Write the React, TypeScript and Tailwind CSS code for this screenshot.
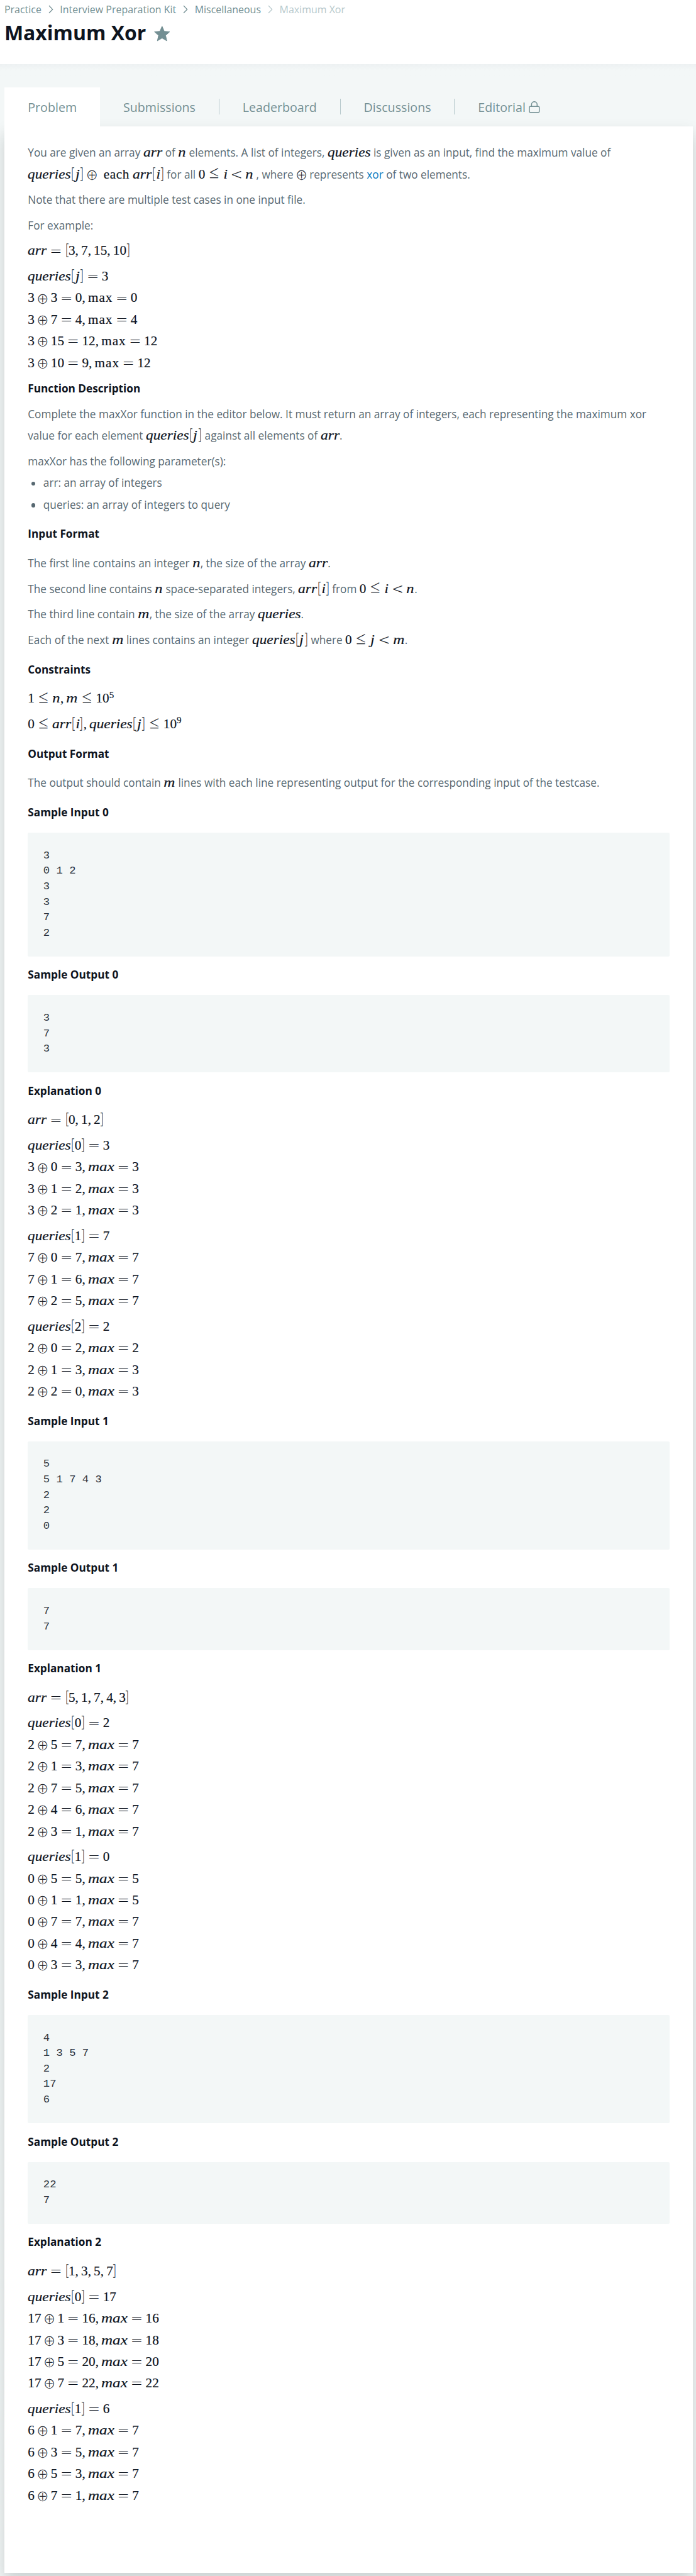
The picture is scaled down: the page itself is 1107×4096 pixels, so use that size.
import React from "react";

/* ---------- Math typesetting ---------- */

const WORD_CLASS: Record<string, string> = {
  queries: "italic inline-block w-[3.229em] origin-left scale-x-[1.097]",
  arr: "italic inline-block w-[1.431em] origin-left scale-x-[1.11]",
  max: "italic inline-block w-[1.979em] origin-left scale-x-[1.18]",
  n: "italic inline-block w-[0.6em] text-center scale-x-[1.15]",
  m: "italic inline-block w-[0.878em] text-center scale-x-[1.18]",
  i: "italic inline-block w-[0.345em] text-center scale-x-[1.1]",
  j: "italic inline-block w-[0.412em] text-center scale-x-[1.15]",
  "\\max": "tracking-[0.046em]",
  "\\each": "tracking-[0.028em] ml-[0.25em] mr-[0.25em]",
};

function Token({ t }: { t: string }) {
  if (t === "=" || t === "<") {
    return (
      <span className="inline-flex w-[0.778em] justify-center mx-[0.278em]">
        <span className="font-['DejaVu_Sans'] font-extralight text-[1.06em] leading-none relative top-[0.05em]">{t}</span>
      </span>
    );
  }
  if (t === "≤") {
    return (
      <span className="inline-flex w-[0.778em] justify-center mx-[0.278em]">
        <span className="font-['Noto_Sans_CJK_JP'] font-thin text-[0.8em] leading-none inline-block scale-y-[1.18] relative top-[-0.02em] [-webkit-text-stroke:0.35px_#0e141e]">
          ≤
        </span>
      </span>
    );
  }
  if (t === "⊕") {
    return (
      <span className="inline-flex w-[0.778em] justify-center mx-[0.222em] [.solo_&]:mx-0">
        <span className="font-['Noto_Sans_CJK_JP'] font-thin text-[0.9em] leading-none relative top-[0.11em] [-webkit-text-stroke:0.3px_#0e141e]">
          ⊕
        </span>
      </span>
    );
  }
  if (t === "[" || t === "]") {
    return (
      <span className="inline-flex w-[0.278em] justify-center">
        <span className="font-['Noto_Sans_CJK_JP'] font-thin text-[1.06em] leading-none inline-block scale-x-[0.8] [-webkit-text-stroke:0.3px_#0e141e]">
          {t}
        </span>
      </span>
    );
  }
  if (t === ",") return <span className="mr-[0.195em]">,</span>;
  if (t[0] === "^") return <span className="text-[0.707em] relative -top-[0.51em]">{t.slice(1)}</span>;
  return <span className={WORD_CLASS[t] ?? ""}>{t.replace("\\", "")}</span>;
}

function M({ children, solo }: { children: string; solo?: boolean }) {
  const tokens = children.match(/\\?[a-z]+|\d+|\^\d|[=<≤⊕,[\]]/g) ?? [];
  return (
    <span
      className={
        (solo ? "solo " : "") +
        "inline-block leading-none whitespace-nowrap text-[21.6px] text-[#0e141e] font-['Liberation_Serif',serif] [-webkit-text-stroke:0.2px_#0e141e]"
      }
    >
      {tokens.map((t, i) => (
        <Token key={i} t={t} />
      ))}
    </span>
  );
}

/* ---------- Content blocks ---------- */

function P({ children }: { children: React.ReactNode }) {
  return <p className="mb-[6.25px] leading-[35px]">{children}</p>;
}

function MathLines({ lines }: { lines: string[] }) {
  return (
    <div className="mb-[6.25px]">
      {lines.map((l, i) => (
        <div key={i} className="h-[35px] leading-[35px]">
          <M>{l}</M>
        </div>
      ))}
    </div>
  );
}

function H({ children }: { children: React.ReactNode }) {
  return <h3 className="mt-[12.5px] mb-[12.5px] h-[35px] font-bold text-[#0e141e] leading-[35px]">{children}</h3>;
}

function Sample({ title, code }: { title: string; code: string }) {
  return (
    <section>
      <h3 className="mt-[12.5px] mb-[15px] h-[35px] font-bold text-[#0e141e] leading-[35px]">{title}</h3>
      <pre className="rounded-[2px] bg-[#f3f7f7] p-[25px] text-[17.5px] leading-[25px] text-[#2b333e] font-['Liberation_Mono',monospace]">
        {code}
      </pre>
    </section>
  );
}

/* ---------- Header ---------- */

function Chevron() {
  return (
    <svg className="mx-[11px] mt-[-1px] h-[14px] w-[8px]" viewBox="0 0 8 14" fill="none" stroke="currentColor" strokeWidth="1.3">
      <path d="M1 1l5.8 6L1 13" />
    </svg>
  );
}

function Header() {
  return (
    <header className="h-[104px] bg-white pl-[7px]">
      <nav className="flex h-8 items-center text-[16.25px] text-[#738f93]">
        <span>Practice</span>
        <Chevron />
        <span>Interview Preparation Kit</span>
        <Chevron />
        <span>Miscellaneous</span>
        <span className="flex items-center text-[#b7c9cc]">
          <Chevron />
          <span>Maximum Xor</span>
        </span>
      </nav>
      <div className="flex h-[42px] items-center">
        <h1 className="text-[32.5px] font-bold leading-[42px] text-[#0e141e]">Maximum Xor</h1>
        <svg className="ml-[13px] mt-[3px] h-[25px] w-[26px]" viewBox="0 0 26 25" fill="#738f93">
          <path
            d="M13 .8l3.5 8.1 8.8.8-6.600 5.900 1.900 8.700-7.600-4.500-7.600 4.500 1.900-8.700L.7 9.700l8.800-.8z"
            stroke="#738f93"
            strokeWidth="1"
            strokeLinejoin="round"
          />
        </svg>
      </div>
    </header>
  );
}

function Tabs() {
  const divider = <span className="h-[25px] w-px bg-[#b7c9cc]" />;
  return (
    <div className="relative z-10 ml-[7.5px] flex h-[63px] items-center text-[20px] text-[#738f93]">
      <a className="flex h-full items-center bg-white px-[37.5px] pt-[2px]">Problem</a>
      <a className="px-[37.5px] pt-[2px]">Submissions</a>
      {divider}
      <a className="px-[37.5px] pt-[2px]">Leaderboard</a>
      {divider}
      <a className="px-[37.5px] pt-[2px]">Discussions</a>
      {divider}
      <a className="flex items-center pl-[37.5px] pt-[2px]">
        Editorial
        <svg className="ml-[5px] h-[19px] w-[18px]" viewBox="0 0 18 19" fill="none" stroke="currentColor" strokeWidth="1.5">
          <rect x="1" y="8.300" width="16" height="9.700" rx="1.500" />
          <path d="M4.500 8.300V5.200a4.500 4.500 0 0 1 9 0v3.100" />
        </svg>
      </a>
    </div>
  );
}

export default function App() {
  return (
    <div className="[zoom:0.9838] flex h-[4163.5px] w-[1125.2px] flex-col overflow-hidden bg-[#f3f7f7] font-['Open_Sans',sans-serif]">
      <Header />
      <div className="h-[37px] bg-linear-to-b from-[#edf1f2] to-[#f3f7f7] to-25%" />
      <Tabs />
      <main className="ml-[7.5px] mr-[5px] h-[3954px] bg-white px-[37.5px] pt-[26px] text-[17.5px] text-[#576871] shadow-[0_12px_24px_rgba(0,20,20,0.18)]">
        <P>
          You are given an array <M>arr</M> of <M>n</M> elements. A list of integers, <M>queries</M> is given as an input, find the
          maximum value of
          <br />
          <M>{"queries[j]⊕\\each arr[i]"}</M> for all <M>{"0≤i<n"}</M> , where <M solo>⊕</M> represents{" "}
          <a className="text-[#097bbf]">xor</a> of two elements.
        </P>
        <P>Note that there are multiple test cases in one input file.</P>
        <P>For example:</P>
        <MathLines lines={["arr=[3,7,15,10]"]} />
        <MathLines lines={["queries[j]=3", "3⊕3=0,\\max=0", "3⊕7=4,\\max=4", "3⊕15=12,\\max=12", "3⊕10=9,\\max=12"]} />
        <P>
          <strong className="font-bold text-[#0e141e]">Function Description</strong>
        </P>
        <P>
          Complete the maxXor function in the editor below. It must return an array of integers, each representing the maximum xor
          <br />
          value for each element <M>queries[j]</M> against all elements of <M>arr</M>.
        </P>
        <P>maxXor has the following parameter(s):</P>
        <ul className="-mt-[6.25px] leading-[35px]">
          {["arr: an array of integers", "queries: an array of integers to query"].map((t) => (
            <li key={t} className="flex items-center">
              <span className="ml-[5.5px] mr-[13px] mt-[1px] size-[6.5px] rounded-full bg-[#576871]" />
              {t}
            </li>
          ))}
        </ul>

        <H>Input Format</H>
        <P>
          The first line contains an integer <M>n</M>, the size of the array <M>arr</M>.
        </P>
        <P>
          The second line contains <M>n</M> space-separated integers, <M>arr[i]</M> from <M>{"0≤i<n"}</M>.
        </P>
        <P>
          The third line contain <M>m</M>, the size of the array <M>queries</M>.
        </P>
        <P>
          Each of the next <M>m</M> lines contains an integer <M>queries[j]</M> where <M>{"0≤j<m"}</M>.
        </P>

        <H>Constraints</H>
        <MathLines lines={["1≤n,m≤10^5"]} />
        <MathLines lines={["0≤arr[i],queries[j]≤10^9"]} />

        <H>Output Format</H>
        <P>
          The output should contain <M>m</M> lines with each line representing output for the corresponding input of the testcase.
        </P>

        <Sample title="Sample Input 0" code={"3\n0 1 2\n3\n3\n7\n2"} />
        <Sample title="Sample Output 0" code={"3\n7\n3"} />
        <H>Explanation 0</H>
        <MathLines lines={["arr=[0,1,2]"]} />
        <MathLines lines={["queries[0]=3", "3⊕0=3,max=3", "3⊕1=2,max=3", "3⊕2=1,max=3"]} />
        <MathLines lines={["queries[1]=7", "7⊕0=7,max=7", "7⊕1=6,max=7", "7⊕2=5,max=7"]} />
        <MathLines lines={["queries[2]=2", "2⊕0=2,max=2", "2⊕1=3,max=3", "2⊕2=0,max=3"]} />

        <Sample title="Sample Input 1" code={"5\n5 1 7 4 3\n2\n2\n0"} />
        <Sample title="Sample Output 1" code={"7\n7"} />
        <H>Explanation 1</H>
        <MathLines lines={["arr=[5,1,7,4,3]"]} />
        <MathLines lines={["queries[0]=2", "2⊕5=7,max=7", "2⊕1=3,max=7", "2⊕7=5,max=7", "2⊕4=6,max=7", "2⊕3=1,max=7"]} />
        <MathLines lines={["queries[1]=0", "0⊕5=5,max=5", "0⊕1=1,max=5", "0⊕7=7,max=7", "0⊕4=4,max=7", "0⊕3=3,max=7"]} />

        <Sample title="Sample Input 2" code={"4\n1 3 5 7\n2\n17\n6"} />
        <Sample title="Sample Output 2" code={"22\n7"} />
        <H>Explanation 2</H>
        <MathLines lines={["arr=[1,3,5,7]"]} />
        <MathLines lines={["queries[0]=17", "17⊕1=16,max=16", "17⊕3=18,max=18", "17⊕5=20,max=20", "17⊕7=22,max=22"]} />
        <MathLines lines={["queries[1]=6", "6⊕1=7,max=7", "6⊕3=5,max=7", "6⊕5=3,max=7", "6⊕7=1,max=7"]} />
      </main>
    </div>
  );
}
